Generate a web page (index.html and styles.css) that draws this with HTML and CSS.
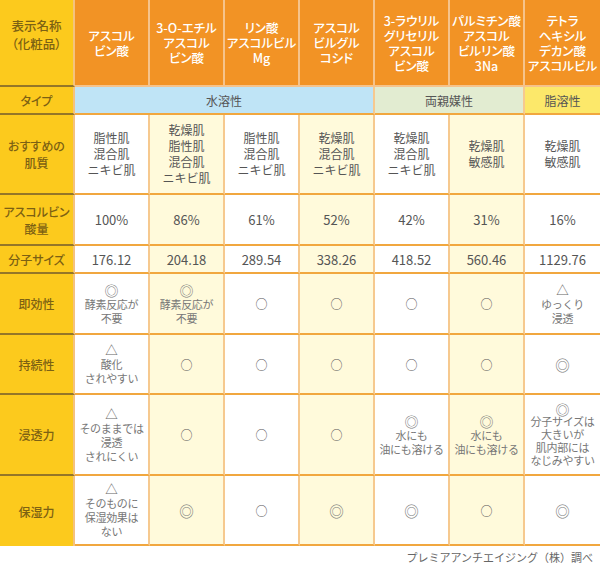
FILE: index.html
```html
<!DOCTYPE html>
<html lang="ja">
<head>
<meta charset="utf-8">
<title>ビタミンC誘導体 比較表</title>
<link rel="stylesheet" href="styles.css">
</head>
<body>
<div class="table">
  <!-- header -->
  <div class="cell rowhead corner">表示名称<br>（化粧品）</div>
  <div class="cell head">アスコル<br>ビン酸</div>
  <div class="cell head">3-O-エチル<br>アスコル<br>ビン酸</div>
  <div class="cell head">リン酸<br>アスコルビル<br>Mg</div>
  <div class="cell head">アスコル<br>ビルグル<br>コシド</div>
  <div class="cell head">3-ラウリル<br>グリセリル<br>アスコル<br>ビン酸</div>
  <div class="cell head">パルミチン酸<br>アスコル<br>ビルリン酸<br>3Na</div>
  <div class="cell head last">テトラ<br>ヘキシル<br>デカン酸<br>アスコルビル</div>

  <!-- type -->
  <div class="cell rowhead">タイプ</div>
  <div class="cell type water">水溶性</div>
  <div class="cell type amphi">両親媒性</div>
  <div class="cell type oil last">脂溶性</div>

  <!-- skin -->
  <div class="cell rowhead">おすすめの<br>肌質</div>
  <div class="cell skin">脂性肌<br>混合肌<br>ニキビ肌</div>
  <div class="cell skin alt">乾燥肌<br>脂性肌<br>混合肌<br>ニキビ肌</div>
  <div class="cell skin">脂性肌<br>混合肌<br>ニキビ肌</div>
  <div class="cell skin alt">乾燥肌<br>混合肌<br>ニキビ肌</div>
  <div class="cell skin">乾燥肌<br>混合肌<br>ニキビ肌</div>
  <div class="cell skin alt">乾燥肌<br>敏感肌</div>
  <div class="cell skin last">乾燥肌<br>敏感肌</div>

  <!-- amount -->
  <div class="cell rowhead">アスコルビン<br>酸量</div>
  <div class="cell num">100%</div>
  <div class="cell num alt">86%</div>
  <div class="cell num">61%</div>
  <div class="cell num alt">52%</div>
  <div class="cell num">42%</div>
  <div class="cell num alt">31%</div>
  <div class="cell num last">16%</div>

  <!-- size -->
  <div class="cell rowhead">分子サイズ</div>
  <div class="cell num">176.12</div>
  <div class="cell num alt">204.18</div>
  <div class="cell num">289.54</div>
  <div class="cell num alt">338.26</div>
  <div class="cell num">418.52</div>
  <div class="cell num alt">560.46</div>
  <div class="cell num last">1129.76</div>

  <!-- immediate -->
  <div class="cell rowhead">即効性</div>
  <div class="cell note"><span class="sym dbl">◎</span>酵素反応が<br>不要</div>
  <div class="cell note alt"><span class="sym dbl">◎</span>酵素反応が<br>不要</div>
  <div class="cell mark">○</div>
  <div class="cell mark alt">○</div>
  <div class="cell mark">○</div>
  <div class="cell mark alt">○</div>
  <div class="cell note last"><span class="sym">△</span>ゆっくり<br>浸透</div>

  <!-- lasting -->
  <div class="cell rowhead">持続性</div>
  <div class="cell note"><span class="sym">△</span>酸化<br>されやすい</div>
  <div class="cell mark alt">○</div>
  <div class="cell mark">○</div>
  <div class="cell mark alt">○</div>
  <div class="cell mark">○</div>
  <div class="cell mark alt">○</div>
  <div class="cell mark double last">◎</div>

  <!-- penetration -->
  <div class="cell rowhead">浸透力</div>
  <div class="cell note"><span class="sym">△</span>そのままでは<br>浸透<br>されにくい</div>
  <div class="cell mark alt">○</div>
  <div class="cell mark">○</div>
  <div class="cell mark alt">○</div>
  <div class="cell note"><span class="sym dbl">◎</span>水にも<br>油にも溶ける</div>
  <div class="cell note alt"><span class="sym dbl">◎</span>水にも<br>油にも溶ける</div>
  <div class="cell note tight last"><span class="sym dbl">◎</span>分子サイズは<br>大きいが<br>肌内部には<br>なじみやすい</div>

  <!-- moisture -->
  <div class="cell rowhead end">保湿力</div>
  <div class="cell note"><span class="sym">△</span>そのものに<br>保湿効果は<br>ない</div>
  <div class="cell mark double alt">◎</div>
  <div class="cell mark">○</div>
  <div class="cell mark double alt">◎</div>
  <div class="cell mark double">◎</div>
  <div class="cell mark alt">○</div>
  <div class="cell mark double last">◎</div>
</div>
<p class="source">プレミアアンチエイジング（株）調べ</p>
</body>
</html>
```

FILE: styles.css
```css
html, body {
  margin: 0;
  padding: 0;
  background: #ffffff;
}

body {
  font-family: "Noto Sans CJK JP", "Noto Sans", sans-serif;
  color: #555555;
  width: 600px;
}

.table {
  display: grid;
  grid-template-columns: repeat(8, 75px);
  grid-template-rows: 87px 28px 80px 51px 28px 61px 60px 81px 70px;
  width: 600px;
}

.cell {
  box-sizing: border-box;
  display: flex;
  flex-direction: column;
  align-items: center;
  justify-content: center;
  text-align: center;
  background: #ffffff;
  border-right: 2px solid #f6c98f;
  border-bottom: 2px solid #f1a73f;
  white-space: nowrap;
}

.cell.last {
  border-right: none;
}

.alt {
  background: #fffadb;
}

.rowhead {
  background: #fcca1d;
  color: #7c6113;
  font-size: 12px;
  line-height: 17px;
  font-weight: 500;
  border-bottom-color: #947628;
  border-right-color: #f4c27e;
  font-feature-settings: "palt";
}

.rowhead.corner {
  font-size: 12.5px;
  line-height: 18px;
  padding-bottom: 16px;
  border-bottom-color: #947628;
}

.rowhead.end {
  border-bottom: none;
}

.head {
  background: #f29325;
  color: #ffffff;
  font-size: 12.5px;
  line-height: 15px;
  font-weight: 500;
  border-bottom-color: #f6c38b;
  border-right-color: #f6c38b;
  font-feature-settings: "palt";
}

.type {
  font-size: 12px;
  color: #555555;
}

.water {
  grid-column: span 4;
  background: #bfe4f6;
}

.amphi {
  grid-column: span 2;
  background: #e2ecd1;
}

.oil {
  background: #fce86a;
}

.skin {
  font-size: 12px;
  line-height: 16px;
}

.num {
  font-size: 13px;
  color: #555555;
}

.mark {
  font-size: 12px;
  color: #555555;
}

.mark.double {
  font-size: 14.5px;
  color: #7a7a7a;
}

.note {
  font-size: 11px;
  line-height: 14px;
  color: #777777;
  letter-spacing: -0.3px;
}

.note.tight {
  line-height: 12.7px;
}

.sym {
  display: block;
  font-size: 12.5px;
  color: #666666;
  letter-spacing: 0;
}

.sym.dbl {
  font-size: 14px;
  color: #7a7a7a;
}

.source {
  margin: 4px 7px 0 0;
  text-align: right;
  font-size: 11px;
  line-height: 14px;
  color: #666666;
}
```
